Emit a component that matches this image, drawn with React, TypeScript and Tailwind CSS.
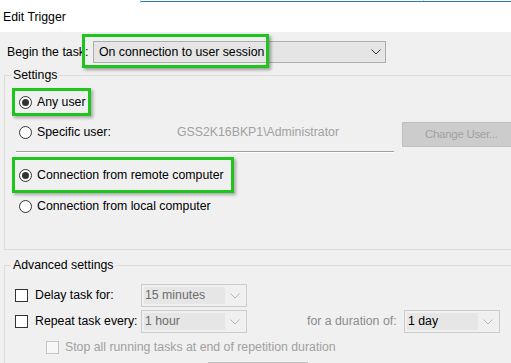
import React from "react";

function Radio({ checked = false }: { checked?: boolean }) {
    return (
        <div className="w-[13px] h-[13px] shrink-0 rounded-full border border-[#333333] bg-white flex items-center justify-center">
            {checked && <div className="w-[7px] h-[7px] rounded-full bg-[#333333]" />}
        </div>
    );
}

function Check({ disabled = false }: { disabled?: boolean }) {
    return (
        <div
            className={
                disabled
                    ? "w-[13px] h-[13px] shrink-0 border border-[#c4c4c4] bg-[#f7f7f7]"
                    : "w-[13px] h-[13px] shrink-0 border border-[#333333] bg-white"
            }
        />
    );
}

function Chevron({ color = "#333333" }: { color?: string }) {
    return (
        <svg width="10" height="6" viewBox="0 0 10 6" className="shrink-0">
            <polyline points="0.5,0.5 5,5 9.5,0.5" fill="none" stroke={color} strokeWidth="1" />
        </svg>
    );
}

function Combo({ value, width, dark = false }: { value: string; width: string; dark?: boolean }) {
    return (
        <div className={`${width} h-[23px] border border-[#cccccc] bg-[#f0f0f0] flex items-center p-[2px]`}>
            <div className={`flex-1 h-full bg-[#e6e6e6] flex items-center pl-[1px] ${dark ? "text-black" : "text-[#6d6d6d]"}`}>
                {value}
            </div>
            <div className="w-[19px] flex justify-center">
                <Chevron color="#b5b5b5" />
            </div>
        </div>
    );
}

export default function App() {
    return (
        <div className="w-[511px] h-[363px] overflow-hidden bg-[#f0f0f0] font-['Segoe_UI','Liberation_Sans',sans-serif] text-[12.3px] text-black">
            {/* title bar */}
            <div className="h-[32px] bg-white">
                <div className="flex h-[3px]">
                    <div className="w-[140px]" />
                    <div className="w-px h-full bg-[#d0d0d0]" />
                    <div className="flex-1 flex flex-col">
                        <div className="h-px flex">
                            <div className="w-[282px]" />
                            <div className="w-px bg-[#d0d0d0]" />
                        </div>
                        <div className="h-px bg-[#2b79c9]" />
                    </div>
                </div>
                <div className="mt-[6px] pl-[3px] leading-4">Edit Trigger</div>
            </div>

            {/* begin the task */}
            <div className="relative mt-[9px] flex items-center h-[22px] pl-[7px]">
                <div className="w-[86px] whitespace-nowrap">Begin the task:</div>
                <div className="w-[293px] h-[22px] border border-[#adadad] bg-[#e5e5e5] flex items-center pl-[5px] pr-[4px]">
                    <div className="flex-1">On connection to user session</div>
                    <Chevron />
                </div>
                <div className="absolute left-[82px] top-[-7px] w-[187px] h-[34px] border-[3px] border-[#1dc51d] shadow-[2px_2px_3px_rgba(0,0,0,0.35)]" />
            </div>

            {/* settings */}
            <fieldset className="mt-[4px] ml-[4px] w-[520px] border border-[#dcdcdc] pb-[30px]">
                <legend className="ml-[6px] px-[2px] leading-4">Settings</legend>
                <div className="mt-[5px] ml-[7px] w-[79px] h-[28px] border-[3px] border-[#1dc51d] shadow-[2px_2px_3px_rgba(0,0,0,0.3)] flex items-center pl-[4px] gap-[5px]">
                    <Radio checked />
                    <span>Any user</span>
                </div>
                <div className="mt-[4px] flex items-start h-[26px]">
                    <div className="h-[24px] flex items-center pl-[14px] gap-[5px]">
                        <Radio />
                        <span className="w-[140px]">Specific user:</span>
                    </div>
                    <div className="h-[24px] flex items-center w-[225px] text-[#a0a0a0]">GSS2K16BKP1\Administrator</div>
                    <div className="mt-[2px] w-[120px] h-[25px] border border-[#bfbfbf] bg-[#cccccc] text-[#a0a0a0] text-[11.5px] tracking-[-0.3px] flex items-center pl-[22px] whitespace-nowrap">
                        Change User...
                    </div>
                </div>
                <div className="mt-[5px] ml-[11px] w-[378px] border-t border-t-[#a0a0a0] border-b border-b-white" />
                <div className="mt-[4px] ml-[7px] w-[222px] h-[36px] border-[3px] border-[#1dc51d] shadow-[2px_2px_3px_rgba(0,0,0,0.3)] flex items-center pl-[4px] gap-[5px]">
                    <Radio checked />
                    <span className="whitespace-nowrap">Connection from remote computer</span>
                </div>
                <div className="h-[26px] flex items-center pl-[14px] gap-[5px]">
                    <Radio />
                    <span>Connection from local computer</span>
                </div>
            </fieldset>

            {/* advanced settings */}
            <fieldset className="mt-[7px] ml-[4px] w-[520px] border border-[#dcdcdc] pb-[20px]">
                <legend className="ml-[6px] px-[2px] leading-4">Advanced settings</legend>
                <div className="mt-[11px] h-[23px] flex items-center pl-[10px]">
                    <Check />
                    <span className="ml-[7px] w-[106px]">Delay task for:</span>
                    <Combo value="15 minutes" width="w-[106px]" />
                </div>
                <div className="mt-[3px] h-[23px] flex items-center pl-[10px]">
                    <Check />
                    <span className="ml-[7px] w-[106px]">Repeat task every:</span>
                    <Combo value="1 hour" width="w-[106px]" />
                    <span className="ml-[60px] w-[97px] text-[#8c8c8c] whitespace-nowrap">for a duration of:</span>
                    <Combo value="1 day" width="w-[96px]" dark />
                </div>
                <div className="mt-[2px] h-[24px] flex items-center pl-[41px] gap-[6px] text-[#a0a0a0]">
                    <Check disabled />
                    <span>Stop all running tasks at end of repetition duration</span>
                </div>
                <div className="mt-[3px] ml-[203px] w-[100px] h-[8px] border border-[#c4c4c4] bg-[#e6e6e6]" />
            </fieldset>
        </div>
    );
}
